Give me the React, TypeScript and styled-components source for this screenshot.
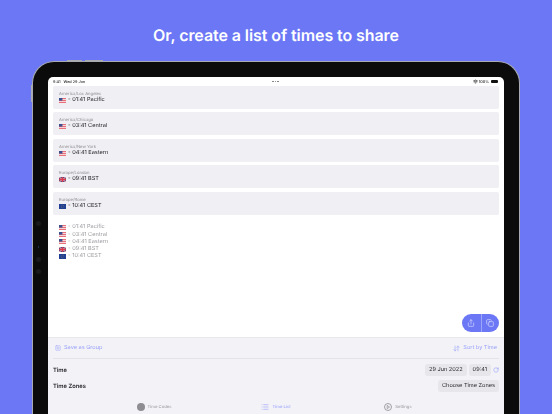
import React from 'react'
import styled, { createGlobalStyle } from 'styled-components'
import { ArrowDownUp, Copy, List, RotateCw, Share, SquarePlus, Wifi } from 'lucide-react'

const GlobalStyle = createGlobalStyle`
  html, body {
    margin: 0;
    height: 100%;
    overflow: hidden;
    background: #6b77f5;
    font-family: Inter, "Liberation Sans", sans-serif;
    text-rendering: geometricPrecision;
  }
`

const ACCENT = '#6b77f5'

const Page = styled.div`
  width: 552px;
  height: 414px;
  overflow: hidden;
  display: flex;
  flex-direction: column;
  align-items: center;
  background: ${ACCENT};
`

const Headline = styled.h1`
  margin: 0;
  height: 61px;
  padding-top: 24px;
  box-sizing: border-box;
  font-size: 16px;
  line-height: 22px;
  font-weight: 600;
  letter-spacing: -0.08px;
  color: #fff;
`

const Device = styled.div`
  position: relative;
  width: 488px;
  height: 353px;
  flex: none;
  box-sizing: border-box;
  padding: 15px 15px 0;
  background: #0b0b0b;
  border: 1px solid #a9abb3;
  border-bottom: 0;
  border-radius: 22px 22px 0 0;
`

const TopButton = styled.span<{ $left: number; $width: number }>`
  position: absolute;
  top: -2px;
  left: ${(p) => p.$left}px;
  width: ${(p) => p.$width}px;
  height: 1px;
  background: #a9abb3;
`

const SideButton = styled.span`
  position: absolute;
  left: -2px;
  top: 23px;
  width: 1px;
  height: 17px;
  background: #a9abb3;
`

const Lens = styled.span<{ $top: number; $small?: boolean }>`
  position: absolute;
  left: ${(p) => (p.$small ? 5 : 3)}px;
  top: ${(p) => p.$top}px;
  width: ${(p) => (p.$small ? 1 : 5)}px;
  height: ${(p) => (p.$small ? 2 : 5)}px;
  border-radius: 50%;
  background: ${(p) => (p.$small ? '#1d3f66' : '#1a1a1c')};
`

const Screen = styled.div`
  position: relative;
  height: 337px;
  display: flex;
  flex-direction: column;
  overflow: hidden;
  background: #fff;
  border-radius: 5px 5px 0 0;
  filter: blur(0.25px);
`

const StatusBar = styled.div`
  height: 9px;
  flex: none;
  display: grid;
  grid-template-columns: 1fr auto 1fr;
  align-items: center;
  padding: 0 6px 0 5px;
  font-size: 3.8px;
  font-weight: 500;
  color: #222;
`

const StatusLeft = styled.div`
  display: flex;
  gap: 3px;
`

const StatusRight = styled.div`
  display: flex;
  justify-content: flex-end;
  align-items: center;
  gap: 1px;
`

const Dots = styled.div`
  display: flex;
  gap: 1px;
`

const Dot = styled.span`
  width: 1.5px;
  height: 1.5px;
  border-radius: 50%;
  background: #777;
`

const Battery = styled.span`
  width: 7px;
  height: 3px;
  margin-left: 1px;
  border-radius: 1px;
  background: #111;
`

const Content = styled.div`
  flex: 1;
  padding: 0 5px;
  min-height: 0;
`

const Rows = styled.div`
  display: flex;
  flex-direction: column;
  gap: 3.4px;
`

const Row = styled.div`
  height: 23px;
  box-sizing: border-box;
  padding: 6px 6px 0;
  background: #efeff4;
  border-radius: 2px;
`

const ZoneName = styled.div`
  font-size: 4.2px;
  line-height: 5px;
  color: #8e8e93;
`

const RowTime = styled.div`
  display: flex;
  align-items: center;
  gap: 2px;
  font-size: 5.6px;
  line-height: 7px;
  color: #1c1c1e;
`

const Summary = styled.div`
  display: flex;
  flex-direction: column;
  margin: 9px 0 0 6px;
`

const SummaryLine = styled.div`
  height: 7.3px;
  display: flex;
  align-items: center;
  gap: 2px;
  font-size: 5.6px;
  color: #9c9ca1;
`

const FlagIcon = styled.svg`
  width: 7px;
  height: 5px;
  flex: none;
`

const ActionPill = styled.div`
  position: absolute;
  right: 5px;
  top: 237px;
  width: 37px;
  height: 18px;
  display: grid;
  grid-template-columns: 1fr 1fr;
  background: ${ACCENT};
  border-radius: 9px;
  color: #d9dcff;
`

const PillCell = styled.div<{ $divider?: boolean }>`
  display: flex;
  align-items: center;
  justify-content: center;
  border-left: ${(p) => (p.$divider ? '1px solid rgba(255,255,255,.35)' : '0')};
`

const Panel = styled.div`
  height: 77px;
  flex: none;
  box-sizing: border-box;
  padding: 0 5px;
  background: #f2f2f7;
  border-top: 1px solid #e8e8ec;
`

const ActionRow = styled.div`
  height: 20px;
  display: flex;
  justify-content: space-between;
  align-items: center;
  padding: 0 2px;
  border-bottom: 1px solid #e3e3e8;
`

const ActionLink = styled.div`
  display: flex;
  align-items: center;
  gap: 3px;
  font-size: 5.6px;
  color: #9aa1fa;
`

const SettingRow = styled.div<{ $height: number }>`
  height: ${(p) => p.$height}px;
  display: flex;
  justify-content: space-between;
  align-items: center;
`

const SettingLabel = styled.div`
  font-size: 5.8px;
  font-weight: 600;
  color: #2a2a2c;
`

const Controls = styled.div`
  display: flex;
  align-items: center;
  gap: 2px;
  color: #8d95f8;
`

const Chip = styled.div`
  height: 12px;
  display: flex;
  align-items: center;
  padding: 0 4px;
  background: #e6e6eb;
  border-radius: 3px;
  font-size: 5.6px;
  color: #2a2a2c;
`

const TabBar = styled.div`
  height: 16px;
  display: grid;
  grid-template-columns: repeat(3, 122px);
  justify-content: center;
  margin-top: 8px;
`

const Tab = styled.div<{ $active?: boolean }>`
  display: flex;
  align-items: center;
  justify-content: center;
  gap: 3px;
  font-size: 4.2px;
  font-weight: 500;
  color: ${(p) => (p.$active ? '#a3a9fa' : '#a5a5aa')};
`

const Disc = styled.span`
  width: 8px;
  height: 8px;
  border-radius: 50%;
  background: #8d8d92;
`

const PlayIcon = styled.svg`
  width: 8px;
  height: 8px;
`

const UsFlag = () => (
  <FlagIcon viewBox="0 0 7 5">
    <rect width="7" height="5" fill="#e9707a" />
    <rect y="1" width="7" height="1" fill="#f3d5d8" />
    <rect y="3" width="7" height="1" fill="#f3d5d8" />
    <rect width="3.4" height="2.6" fill="#3c4f8f" />
  </FlagIcon>
)

const UkFlag = () => (
  <FlagIcon viewBox="0 0 7 5">
    <rect width="7" height="5" fill="#3c4a8c" />
    <path d="M0 0l7 5M7 0L0 5" stroke="#e6a9b2" strokeWidth="1.1" />
    <path d="M3.5 0v5M0 2.5h7" stroke="#d9394c" strokeWidth="1.3" />
  </FlagIcon>
)

const EuFlag = () => (
  <FlagIcon viewBox="0 0 7 5">
    <rect width="7" height="5" fill="#1f3f94" />
    <circle cx="3.5" cy="2.5" r="1.4" fill="none" stroke="#c9b64e" strokeWidth=".4" strokeDasharray=".4 .4" />
  </FlagIcon>
)

const zones = [
  { name: 'America/Los Angeles', time: '01:41 Pacific', Flag: UsFlag },
  { name: 'America/Chicago', time: '03:41 Central', Flag: UsFlag },
  { name: 'America/New York', time: '04:41 Eastern', Flag: UsFlag },
  { name: 'Europe/London', time: '09:41 BST', Flag: UkFlag },
  { name: 'Europe/Rome', time: '10:41 CEST', Flag: EuFlag },
]

const App = () => (
  <Page>
    <GlobalStyle />
    <Headline>Or, create a list of times to share</Headline>
    <Device>
      <TopButton $left={34} $width={15} />
      <TopButton $left={52} $width={18} />
      <SideButton />
      <Lens $top={159} />
      <Lens $small $top={184} />
      <Lens $top={195} />
      <Lens $top={207} />
      <Screen>
        <StatusBar>
          <StatusLeft>
            <span>9:41</span>
            <span>Wed 29 Jun</span>
          </StatusLeft>
          <Dots>
            <Dot />
            <Dot />
            <Dot />
          </Dots>
          <StatusRight>
            <Wifi size={5} strokeWidth={3} />
            <span>100%</span>
            <Battery />
          </StatusRight>
        </StatusBar>
        <Content>
          <Rows>
            {zones.map(({ name, time, Flag }) => (
              <Row key={name}>
                <ZoneName>{name}</ZoneName>
                <RowTime>
                  <Flag />
                  <span>- {time}</span>
                </RowTime>
              </Row>
            ))}
          </Rows>
          <Summary>
            {zones.map(({ name, time, Flag }) => (
              <SummaryLine key={name}>
                <Flag />
                <span>- {time}</span>
              </SummaryLine>
            ))}
          </Summary>
        </Content>
        <ActionPill>
          <PillCell>
            <Share size={8} />
          </PillCell>
          <PillCell $divider>
            <Copy size={8} />
          </PillCell>
        </ActionPill>
        <Panel>
          <ActionRow>
            <ActionLink>
              <SquarePlus size={6} />
              <span>Save as Group</span>
            </ActionLink>
            <ActionLink>
              <ArrowDownUp size={7} />
              <span>Sort by Time</span>
            </ActionLink>
          </ActionRow>
          <SettingRow $height={22}>
            <SettingLabel>Time</SettingLabel>
            <Controls>
              <Chip>29 Jun 2022</Chip>
              <Chip>09:41</Chip>
              <RotateCw size={6} />
            </Controls>
          </SettingRow>
          <SettingRow $height={10}>
            <SettingLabel>Time Zones</SettingLabel>
            <Chip>Choose Time Zones</Chip>
          </SettingRow>
          <TabBar>
            <Tab>
              <Disc />
              <span>Time Codes</span>
            </Tab>
            <Tab $active>
              <List size={8} />
              <span>Time List</span>
            </Tab>
            <Tab>
              <PlayIcon viewBox="0 0 8 8">
                <circle cx="4" cy="4" r="3.5" fill="none" stroke="#8d8d92" strokeWidth=".8" />
                <path d="M3.2 2.4L5.6 4 3.2 5.6z" fill="none" stroke="#8d8d92" strokeWidth=".7" />
              </PlayIcon>
              <span>Settings</span>
            </Tab>
          </TabBar>
        </Panel>
      </Screen>
    </Device>
  </Page>
)

export default App
